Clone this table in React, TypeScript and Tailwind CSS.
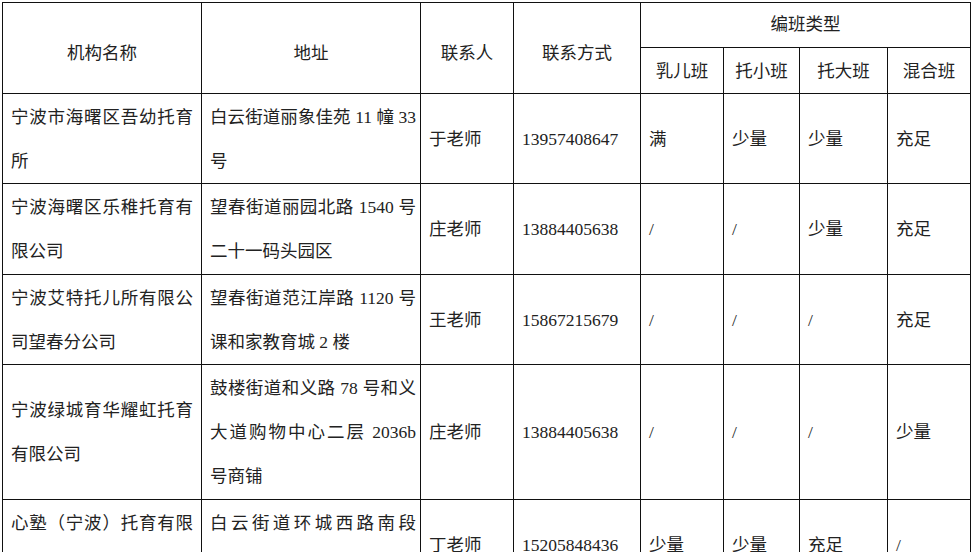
import React from "react";

type Row = {
  name: string[];
  addr: string[];
  person: string;
  phone: string;
  classes: string[];
  height: string;
};

const rows: Row[] = [
  {
    name: ["宁波市海曙区吾幼托育", "所"],
    addr: ["白云街道丽象佳苑 11 幢 33", "号"],
    person: "于老师",
    phone: "13957408647",
    classes: ["满", "少量", "少量", "充足"],
    height: "h-[90px]",
  },
  {
    name: ["宁波海曙区乐稚托育有", "限公司"],
    addr: ["望春街道丽园北路 1540 号", "二十一码头园区"],
    person: "庄老师",
    phone: "13884405638",
    classes: ["/", "/", "少量", "充足"],
    height: "h-[91px]",
  },
  {
    name: ["宁波艾特托儿所有限公", "司望春分公司"],
    addr: ["望春街道范江岸路 1120 号", "课和家教育城 2 楼"],
    person: "王老师",
    phone: "15867215679",
    classes: ["/", "/", "/", "充足"],
    height: "h-[90px]",
  },
  {
    name: ["宁波绿城育华耀虹托育", "有限公司"],
    addr: ["鼓楼街道和义路 78 号和义", "大道购物中心二层 2036b", "号商铺"],
    person: "庄老师",
    phone: "13884405638",
    classes: ["/", "/", "/", "少量"],
    height: "h-[135px]",
  },
  {
    name: ["心塾（宁波）托育有限", "公司"],
    addr: ["白云街道环城西路南段", "号"],
    person: "丁老师",
    phone: "15205848436",
    classes: ["少量", "少量", "充足", "/"],
    height: "h-[90px]",
  },
];

// wrapped lines: every line but the last one is stretched to the cell width
function Lines({ lines }: { lines: string[] }) {
  return (
    <>
      {lines.map((line, i) => (
        <div
          key={i}
          className={
            i < lines.length - 1
              ? "whitespace-nowrap text-justify [text-align-last:justify]"
              : "whitespace-nowrap"
          }
        >
          {line}
        </div>
      ))}
    </>
  );
}

const cell = "border border-[#111] px-2 align-middle";
const head = "border border-[#111] px-2 align-middle text-center font-normal leading-[24px]";

export default function App() {
  return (
    <div
      className="min-h-screen bg-white pl-[2px] pt-[2px] text-[17.5px] leading-[44px] text-[#222]"
      style={{ fontFamily: '"Liberation Serif", "Noto Sans CJK SC", serif' }}
    >
      <table className="w-[968px] table-fixed border-collapse">
        <colgroup>
          <col className="w-[199px]" />
          <col className="w-[219px]" />
          <col className="w-[93px]" />
          <col className="w-[127px]" />
          <col className="w-[83px]" />
          <col className="w-[76px]" />
          <col className="w-[88px]" />
          <col className="w-[83px]" />
        </colgroup>
        <thead>
          <tr>
            <th rowSpan={2} className={`${head} pt-[9px]`}>
              机构名称
            </th>
            <th rowSpan={2} className={`${head} pt-[9px]`}>
              地址
            </th>
            <th rowSpan={2} className={`${head} pt-[9px]`}>
              联系人
            </th>
            <th rowSpan={2} className={`${head} pt-[9px]`}>
              联系方式
            </th>
            <th colSpan={4} className={`${head} h-[45px] pb-[2px]`}>
              编班类型
            </th>
          </tr>
          <tr>
            {["乳儿班", "托小班", "托大班", "混合班"].map((t) => (
              <th key={t} className={`${head} h-[46px]`}>
                {t}
              </th>
            ))}
          </tr>
        </thead>
        <tbody>
          {rows.map((r, i) => (
            <tr key={i}>
              <td className={`${cell} ${r.height}`}>
                <Lines lines={r.name} />
              </td>
              <td className={`${cell} pr-1`}>
                <Lines lines={r.addr} />
              </td>
              <td className={cell}>{r.person}</td>
              <td className={cell}>{r.phone}</td>
              {r.classes.map((c, j) => (
                <td key={j} className={cell}>
                  {c}
                </td>
              ))}
            </tr>
          ))}
        </tbody>
      </table>
    </div>
  );
}
